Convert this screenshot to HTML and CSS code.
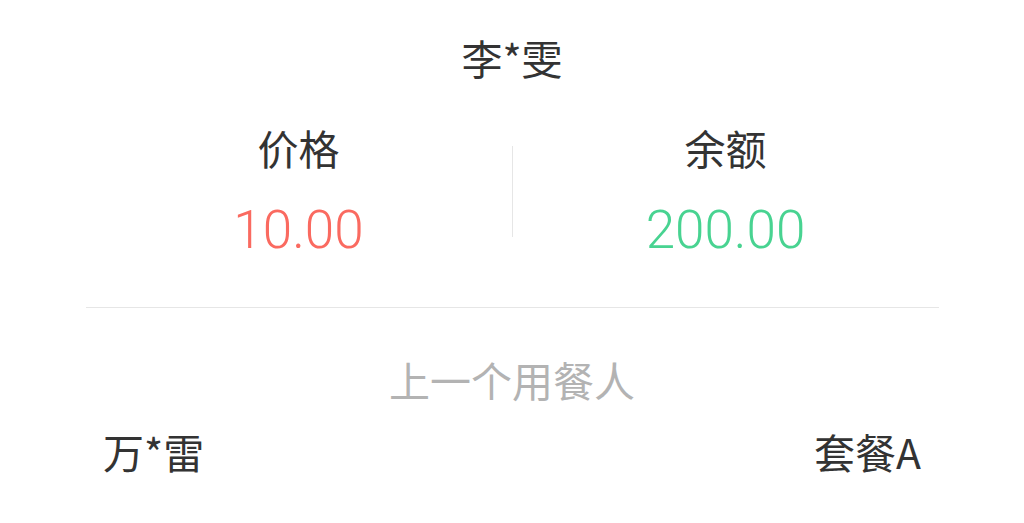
FILE: index.html
```html
<!DOCTYPE html>
<html lang="zh-CN">
<head>
<meta charset="utf-8">
<title>用餐信息</title>
<link rel="stylesheet" href="styles.css">
</head>
<body>
  <main class="card">
    <h1 class="diner">李*雯</h1>
    <section class="stats">
      <div class="stat">
        <div class="stat-label">价格</div>
        <div class="stat-value price">10.00</div>
      </div>
      <div class="stat-divider"></div>
      <div class="stat">
        <div class="stat-label">余额</div>
        <div class="stat-value balance">200.00</div>
      </div>
    </section>
    <section class="previous">
      <h2 class="previous-title">上一个用餐人</h2>
      <div class="previous-row">
        <span class="previous-name">万*雷</span>
        <span class="previous-meal">套餐A</span>
      </div>
    </section>
  </main>
</body>
</html>
```

FILE: styles.css
```css
* {
  box-sizing: border-box;
}

html,
body {
  margin: 0;
  padding: 0;
  background: #ffffff;
}

body {
  font-family: "Noto Sans CJK SC", "Noto Sans", sans-serif;
  color: #333333;
}

.card {
  width: 1024px;
  display: flex;
  flex-direction: column;
  align-items: center;
}

.diner {
  margin: 27px 0 0;
  font-size: 41px;
  font-weight: 400;
  line-height: 60px;
}

.stats {
  width: 853px;
  display: flex;
  align-items: flex-start;
  margin-top: 32px;
  padding-bottom: 49px;
  border-bottom: 1px solid #e6e6e6;
}

.stat {
  flex: 1;
  display: flex;
  flex-direction: column;
  align-items: center;
}

.stat-label {
  font-size: 41px;
  line-height: 56px;
}

.stat-value {
  margin-top: 27px;
  font-family: Roboto, "Liberation Sans", sans-serif;
  font-size: 53px;
  font-weight: 300;
  line-height: 56px;
}

.price {
  color: #fa6a60;
}

.balance {
  color: #48d391;
}

.stat-divider {
  width: 1px;
  height: 91px;
  margin-top: 27px;
  background: #e6e6e6;
}

.previous {
  width: 1024px;
  display: flex;
  flex-direction: column;
  align-items: center;
}

.previous-title {
  margin: 43px 0 0;
  font-size: 41px;
  font-weight: 400;
  line-height: 56px;
  color: #b3b3b3;
}

.previous-row {
  width: 100%;
  display: flex;
  justify-content: space-between;
  padding: 0 103px;
  margin-top: 16px;
  font-size: 41px;
  line-height: 56px;
}
```
